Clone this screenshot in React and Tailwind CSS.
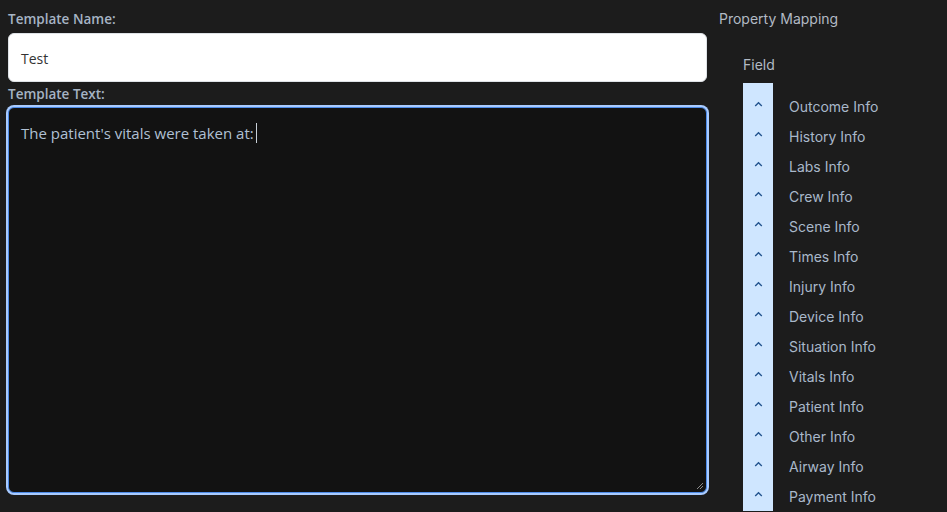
import React from "react";

const fields = [
  "Outcome Info",
  "History Info",
  "Labs Info",
  "Crew Info",
  "Scene Info",
  "Times Info",
  "Injury Info",
  "Device Info",
  "Situation Info",
  "Vitals Info",
  "Patient Info",
  "Other Info",
  "Airway Info",
  "Payment Info",
];

const Chevron = () => (
  <svg width="9" height="6" viewBox="0 0 9 6" className="block">
    <polyline points="1.2,5 4.5,1.8 7.8,5" fill="none" stroke="#23548f" strokeWidth="1.4" />
  </svg>
);

const App = () => {
  return (
    <div className="flex h-[512px] w-[947px] overflow-hidden bg-[#1c1c1c]">
      {/* left: template editor */}
      <div className="flex w-[707px] shrink-0 flex-col pl-2 pt-[10px] font-['Open_Sans',sans-serif]">
        <label className="text-[13.5px] font-semibold leading-[18px] text-[#a6b4c4]">Template Name:</label>
        <div className="mt-[5px] flex h-[49px] items-center rounded-md border border-[#dee2e6] bg-white px-3 pt-px text-[14px] text-[#333]">
          Test
        </div>
        <label className="mt-[3px] text-[13.5px] font-semibold leading-[18px] text-[#a6b4c4]">Template Text:</label>
        <div className="relative mt-[4px] h-[386px] rounded-md border border-[#4d8be8] bg-[#121212] px-3 pt-[11px] text-[15px] leading-[24px] text-[#b0c0d4] ring-2 ring-[#a9cbff]">
          The patient's vitals were taken at:
          <span className="ml-[2px] inline-block h-[20px] w-px translate-y-[4px] bg-[#c8d0d8]" />
          <svg width="8" height="8" viewBox="0 0 8 8" className="absolute bottom-[2px] right-[2px]">
            <line x1="1" y1="7" x2="7" y2="1" stroke="#8a8a8a" strokeWidth="1" />
            <line x1="4" y1="7" x2="7" y2="4" stroke="#8a8a8a" strokeWidth="1" />
          </svg>
        </div>
      </div>

      {/* right: property mapping */}
      <div className="ml-3 flex flex-col pt-[10px] font-['Inter',sans-serif]">
        <div className="text-[14px] leading-[18px] text-[#b2bac4]">Property Mapping</div>
        <div className="ml-6 mt-[27px] text-[14px] leading-[20px] text-[#b2bac4]">Field</div>
        <div className="ml-6 mt-[8px] flex">
          <div className="flex w-[30px] flex-col items-center bg-[#cfe6ff] pt-[8px]">
            {fields.map((f) => (
              <div key={f} className="flex h-[30px] items-center justify-center pb-[4px]">
                <Chevron />
              </div>
            ))}
          </div>
          <div className="flex flex-col pl-4 pt-[8px]">
            {fields.map((f) => (
              <div key={f} className="flex h-[30px] items-center text-[14px] text-[#a9b8ca]">
                {f}
              </div>
            ))}
          </div>
        </div>
      </div>
    </div>
  );
};

export default App;
